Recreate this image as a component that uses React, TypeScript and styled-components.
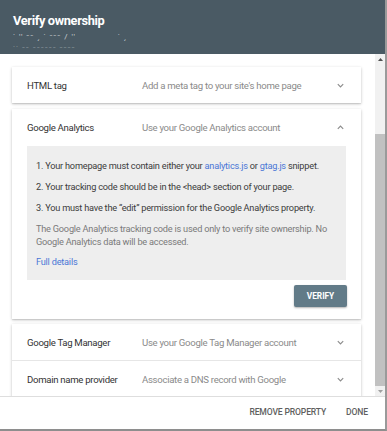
import React from "react";
import styled, { createGlobalStyle } from "styled-components";

const Global = createGlobalStyle`
  html, body { margin: 0; padding: 0; background: #fff; }
  body { font-family: Roboto, "Noto Sans", "Liberation Sans", sans-serif; }
  * { box-sizing: border-box; }
`;

const Frame = styled.div`
  width: 387px;
  height: 431px;
  display: flex;
  flex-direction: column;
  background: #fff;
  border-right: 2px solid #9a9a9a;
  border-bottom: 2px solid #8e8e8e;
  overflow: hidden;
`;

const Header = styled.header`
  height: 54px;
  flex: 0 0 54px;
  background: #4a5a64;
  padding: 13px 13px 0;
  display: flex;
  flex-direction: column;
  overflow: hidden;
`;

const Title = styled.h1`
  margin: 0;
  font-size: 12.8px;
  font-weight: 700;
  color: #fff;
  line-height: 16px;
  letter-spacing: -0.35px;
`;

const Faint = styled.div<{ $op: number; $gap: number }>`
  font-size: 8px;
  line-height: 10px;
  margin-top: ${(p) => p.$gap}px;
  color: rgba(255, 255, 255, ${(p) => p.$op});
  white-space: pre;
  letter-spacing: 1px;
`;

const Body = styled.div`
  flex: 1;
  display: flex;
  min-height: 0;
`;

const Content = styled.div`
  flex: 1;
  padding: 13px 14px 0 12px;
  overflow: hidden;
  display: flex;
  flex-direction: column;
`;

const Panel = styled.section<{ $expanded?: boolean }>`
  background: #fff;
  box-shadow: 0 1px 3px rgba(0, 0, 0, 0.22), 0 1px 1px rgba(0, 0, 0, 0.08);
  margin: ${(p) => (p.$expanded ? "6px 0 5px" : "0")};
  flex-shrink: 0;
`;

const Row = styled.div<{ $h?: number; $divider?: boolean }>`
  height: ${(p) => p.$h ?? 36}px;
  display: flex;
  align-items: center;
  padding: 0 16px 0 15px;
  font-size: 9.6px;
  letter-spacing: -0.3px;
  white-space: nowrap;
  border-bottom: ${(p) => (p.$divider ? "1px solid #e6e6e6" : "none")};
`;

const RowTitle = styled.div`
  width: 115px;
  color: #333;
  flex-shrink: 0;
`;

const RowDesc = styled.div`
  flex: 1;
  color: #8a8a8a;
`;

const Chevron = styled.svg`
  width: 9px;
  height: 9px;
  flex-shrink: 0;
`;

const InfoBox = styled.div`
  margin: 0 15px;
  background: #eeeeee;
  padding: 13px 9px 12px;
  font-size: 9.2px;
  letter-spacing: -0.22px;
  line-height: 13px;
  color: #3c3c3c;
`;

const Step = styled.p`
  margin: 0 0 8px;
  white-space: nowrap;
`;

const Note = styled.p`
  margin: 0 0 7px;
  color: #7a7a7a;
`;

const Link = styled.a`
  color: #4a76d6;
  text-decoration: none;
`;

const Actions = styled.div`
  display: flex;
  justify-content: flex-end;
  padding: 5px 14px 12px;
`;

const Verify = styled.button`
  width: 53px;
  height: 22px;
  border: none;
  border-radius: 2px;
  background: #627b88;
  color: #fff;
  font-family: inherit;
  font-size: 8.3px;
  font-weight: 700;
  letter-spacing: 0;
  box-shadow: 0 1px 2px rgba(0, 0, 0, 0.3);
  padding: 0;
`;

const Scrollbar = styled.div`
  width: 10px;
  flex: 0 0 10px;
  display: flex;
  flex-direction: column;
  background: #f1f1f1;
`;

const Arrow = styled.div`
  height: 10px;
  flex: 0 0 10px;
  display: flex;
  align-items: center;
  justify-content: center;
`;

const TrackGap = styled.div`
  flex: 0 0 70px;
`;

const Thumb = styled.div`
  flex: 1;
  background: #c1c1c1;
`;

const Footer = styled.footer`
  height: 33px;
  flex: 0 0 33px;
  border-top: 1px solid #dedede;
  display: flex;
  align-items: center;
  justify-content: flex-end;
  gap: 20px;
  padding: 0 17px 2px 0;
`;

const FooterBtn = styled.span`
  font-size: 8.6px;
  font-weight: 500;
  color: #5f5f5f;
  letter-spacing: -0.15px;
  white-space: nowrap;
`;

const Down = () => (
  <Chevron viewBox="0 0 10 10">
    <path d="M2 3.5 L5 6.5 L8 3.5" fill="none" stroke="#8c8c8c" strokeWidth="1.3" />
  </Chevron>
);

const Up = () => (
  <Chevron viewBox="0 0 10 10">
    <path d="M2 6.5 L5 3.5 L8 6.5" fill="none" stroke="#8c8c8c" strokeWidth="1.3" />
  </Chevron>
);

export default function App() {
  return (
    <>
      <Global />
      <Frame>
        <Header>
          <Title>Verify ownership</Title>
          <Faint $op={0.75} $gap={3}>{"˙ ′′ ⁻⁻ ˏ ˙ ⁻⁻⁻ / ′′              ˙ ˏ"}</Faint>
          <Faint $op={0.4} $gap={2}>{"˙˙ ⁻⁻ ⁻⁻⁻⁻⁻⁻ ⁻⁻⁻⁻"}</Faint>
        </Header>
        <Body>
          <Content>
            <Panel>
              <Row>
                <RowTitle>HTML tag</RowTitle>
                <RowDesc>Add a meta tag to your site's home page</RowDesc>
                <Down />
              </Row>
            </Panel>
            <Panel $expanded>
              <Row $h={37}>
                <RowTitle>Google Analytics</RowTitle>
                <RowDesc>Use your Google Analytics account</RowDesc>
                <Up />
              </Row>
              <InfoBox>
                <Step>
                  1. Your homepage must contain either your <Link>analytics.js</Link> or{" "}
                  <Link>gtag.js</Link> snippet.
                </Step>
                <Step>2. Your tracking code should be in the &lt;head&gt; section of your page.</Step>
                <Step>3. You must have the “edit” permission for the Google Analytics property.</Step>
                <Note>
                  The Google Analytics tracking code is used only to verify site ownership. No
                  Google Analytics data will be accessed.
                </Note>
                <Link>Full details</Link>
              </InfoBox>
              <Actions>
                <Verify>VERIFY</Verify>
              </Actions>
            </Panel>
            <Panel>
              <Row $h={37} $divider>
                <RowTitle>Google Tag Manager</RowTitle>
                <RowDesc>Use your Google Tag Manager account</RowDesc>
                <Down />
              </Row>
              <Row $h={37}>
                <RowTitle>Domain name provider</RowTitle>
                <RowDesc>Associate a DNS record with Google</RowDesc>
                <Down />
              </Row>
            </Panel>
          </Content>
          <Scrollbar>
            <Arrow>
              <svg width="5" height="3" viewBox="0 0 5 3">
                <path d="M0 3 L2.5 0 L5 3 Z" fill="#505050" />
              </svg>
            </Arrow>
            <TrackGap />
            <Thumb />
            <Arrow>
              <svg width="5" height="3" viewBox="0 0 5 3">
                <path d="M0 0 L2.5 3 L5 0 Z" fill="#a0a0a0" />
              </svg>
            </Arrow>
          </Scrollbar>
        </Body>
        <Footer>
          <FooterBtn>REMOVE PROPERTY</FooterBtn>
          <FooterBtn>DONE</FooterBtn>
        </Footer>
      </Frame>
    </>
  );
}
